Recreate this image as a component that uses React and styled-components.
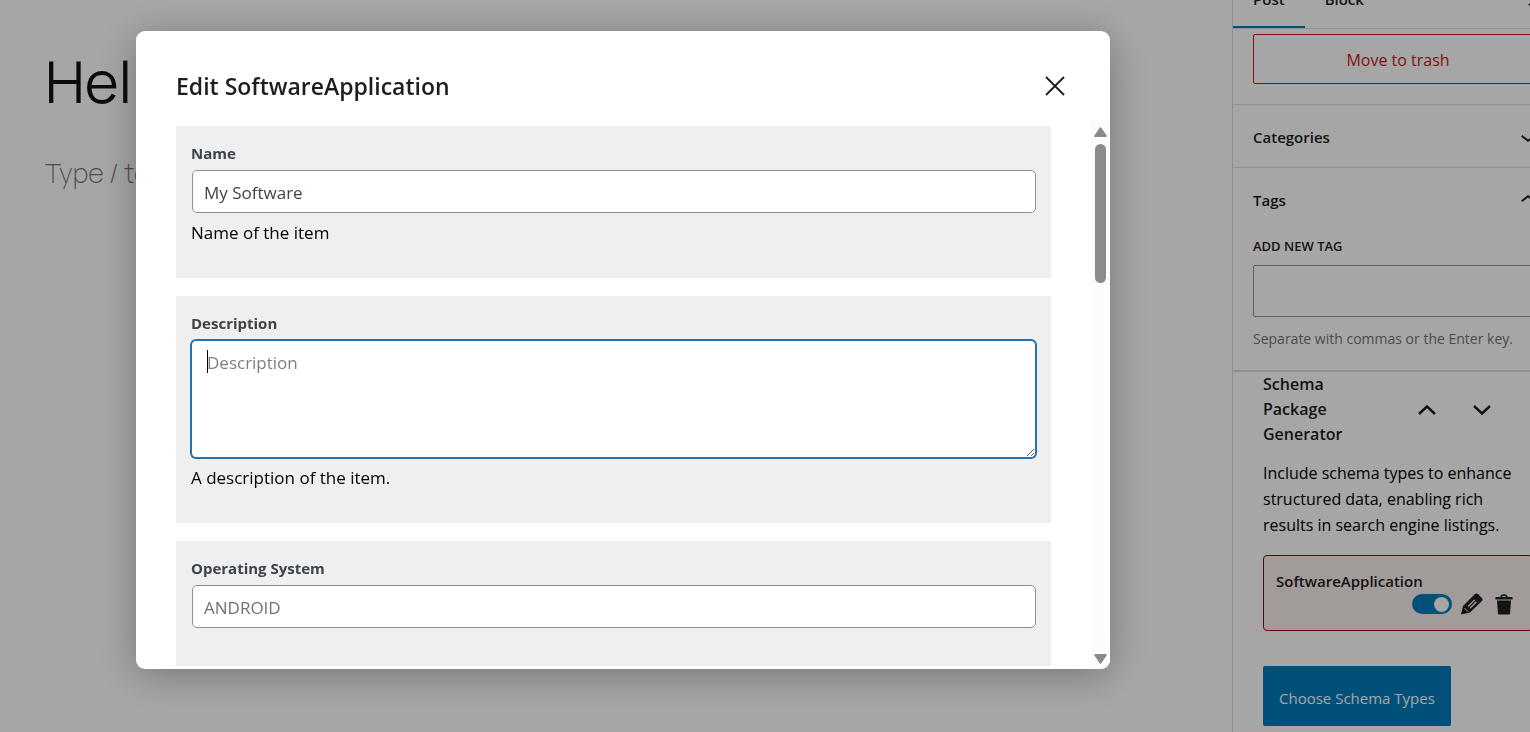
import React from 'react';
import styled, { createGlobalStyle } from 'styled-components';

const GlobalStyle = createGlobalStyle`
  * {
    box-sizing: border-box;
  }
  body {
    margin: 0;
    background: #fff;
    color: #1e1e1e;
    font-family: "Segoe UI", "Open Sans", "Noto Sans", sans-serif;
    font-size: 16px;
  }
  button, input, textarea {
    font-family: inherit;
    font-size: inherit;
  }
  h1, h2, h3, p {
    margin: 0;
  }
`;

const Page = styled.div`
  display: flex;
  height: 100vh;
  overflow: hidden;
`;

const Canvas = styled.main`
  flex: 1;
  min-width: 0;
  padding: 40px 45px;
  font-family: Manrope, Inter, sans-serif;
`;

const PostTitle = styled.h1`
  color: #111;
  font-size: 58px;
  line-height: 82px;
  font-weight: 400;
`;

const PostPrompt = styled.p`
  margin-top: 33px;
  color: #767676;
  font-size: 27px;
  line-height: 36px;
  font-weight: 200;
`;

const Sidebar = styled.aside`
  flex: 0 0 331px;
  margin-right: -33px;
  border-left: 1px solid #ddd;
`;

const Tabs = styled.div`
  display: flex;
  align-items: stretch;
  height: 60px;
  margin-top: -31px;
  border-bottom: 1px solid #ddd;
`;

const Tab = styled.button`
  padding: 0 20px;
  border: 0;
  background: none;
  color: #1e1e1e;
  font-size: 15px;
  font-weight: 600;
  box-shadow: ${({ $active }) => ($active ? 'inset 0 -2px 0 #007cba' : 'none')};
`;

const TabClose = styled.button`
  margin-left: auto;
  padding: 0 21px;
  border: 0;
  background: none;
  display: flex;
  align-items: center;
`;

const Panel = styled.section`
  padding: ${({ $pad }) => $pad || '0 20px'};
  border-bottom: ${({ $line }) => $line || 1}px solid #ddd;
`;

const TrashButton = styled.button`
  width: 100%;
  height: 50px;
  padding: 2px 0 0;
  border: 1px solid #cc1818;
  border-radius: 2px;
  background: none;
  color: #cc1818;
  font-size: 16px;
`;

const PanelToggle = styled.button`
  display: flex;
  justify-content: space-between;
  align-items: center;
  width: 100%;
  height: 62px;
  padding: 2px 0 0;
  border: 0;
  background: none;
  color: #1e1e1e;
  font-size: 15px;
  font-weight: 600;
`;

const TagLabel = styled.label`
  display: block;
  margin-top: 6px;
  font-size: 13px;
  line-height: 20px;
  font-weight: 600;
  text-transform: uppercase;
`;

const TagInput = styled.input`
  display: block;
  width: 100%;
  height: 52px;
  margin-top: 9px;
  border: 1px solid #949494;
  border-radius: 2px;
  background: #fff;
`;

const TagHint = styled.p`
  margin: 12px 0 21px;
  color: #757575;
  font-size: 14px;
  line-height: 20px;
  white-space: nowrap;
`;

const Schema = styled.section`
  padding: 0 30px;
`;

const SchemaHead = styled.div`
  display: flex;
  align-items: center;
`;

const SchemaTitle = styled.h2`
  width: 136px;
  padding-right: 40px;
  font-size: 16px;
  line-height: 25px;
  font-weight: 600;
`;

const IconButton = styled.button`
  display: flex;
  align-items: center;
  justify-content: center;
  width: ${({ $width }) => $width}px;
  padding: 0;
  border: 0;
  background: none;
  color: #1e1e1e;
`;

const SchemaText = styled.p`
  margin: 13px -4px 0 0;
  color: #000;
  font-size: 16px;
  line-height: 26px;
`;

const SchemaCard = styled.div`
  height: 76px;
  margin-top: 17px;
  padding: 14px 12px;
  border: 1px solid #a00000;
  border-radius: 4px;
  background: #f7efec;
`;

const SchemaName = styled.label`
  display: block;
  font-size: 15px;
  line-height: 22px;
  font-weight: 600;
`;

const SchemaActions = styled.div`
  display: flex;
  justify-content: flex-end;
  align-items: center;
  height: 24px;
`;

const Switch = styled.input.attrs({ type: 'checkbox' })`
  appearance: none;
  display: flex;
  align-items: center;
  justify-content: flex-end;
  width: 40px;
  height: 20px;
  margin: 0 4px 0 0;
  padding: 0 3px;
  border-radius: 10px;
  background: #007cba;

  &::before {
    content: "";
    width: 15px;
    height: 15px;
    border-radius: 50%;
    background: #fff;
  }
`;

const ChooseButton = styled.button`
  height: 60px;
  margin-top: 35px;
  padding: 3px 16px 0;
  border: 0;
  border-radius: 2px;
  background: #007cba;
  color: #fff;
  font-size: 15px;
`;

const Overlay = styled.div`
  position: fixed;
  inset: 0;
  display: flex;
  padding: 31px 420px 63px 136px;
  background: rgba(0, 0, 0, 0.35);
`;

const Modal = styled.div`
  flex: 1;
  min-width: 0;
  display: flex;
  flex-direction: column;
  overflow: hidden;
  border-radius: 9px;
  background: #fff;
  box-shadow: 0 6px 40px rgba(0, 0, 0, 0.3);
`;

const ModalHeader = styled.header`
  display: flex;
  align-items: center;
  justify-content: space-between;
  height: 90px;
  padding: 20px 40px 0;
`;

const ModalTitle = styled.h2`
  font-size: 23px;
  line-height: 32px;
  font-weight: 600;
`;

const ModalBody = styled.div`
  flex: 1;
  min-height: 0;
  display: flex;
`;

const Fields = styled.form`
  flex: 1;
  min-width: 0;
  display: flex;
  flex-direction: column;
  gap: 18px;
  padding: 5px 40px 3px;
  overflow: hidden;
`;

const FieldBox = styled.div`
  padding: 17px 15px 38px;
  background: #efefef;
`;

const FieldLabel = styled.label`
  display: block;
  height: 27px;
  color: #3c434a;
  font-size: 15px;
  line-height: 20px;
  font-weight: 700;
`;

const FieldInput = styled.input`
  display: block;
  width: calc(100% - 1px);
  height: 43px;
  margin-left: 1px;
  padding: 2px 11px 0;
  border: 1px solid #8c8f94;
  border-radius: 5px;
  background: #fff;
  color: #3c434a;
  font-size: 17px;

  &::placeholder {
    color: #6d7278;
  }
`;

const AreaWrap = styled.div`
  position: relative;
`;

const FieldArea = styled.textarea`
  display: block;
  width: 100%;
  height: 118px;
  padding: 10px 15px;
  border: 1px solid #2271b1;
  border-radius: 5px;
  outline: none;
  background: #fff;
  box-shadow: 0 0 0 1px #2271b1;
  caret-color: transparent;
  font-size: 17px;
  line-height: 24px;
  resize: vertical;

  &::placeholder {
    color: #7b8087;
  }
`;

const Caret = styled.span`
  position: absolute;
  left: 16px;
  top: 10px;
  width: 1px;
  height: 23px;
  background: #000;
`;

const FieldHelp = styled.p`
  height: 27px;
  padding-top: 6px;
  color: #000;
  font-size: 17px;
  line-height: 27px;
`;

const Scrollbar = styled.div`
  display: flex;
  flex-direction: column;
  align-items: center;
  justify-content: space-between;
  width: 19px;
  padding: 6px 0 5px;
  background: #fcfcfc;
`;

const Thumb = styled.div`
  width: 11px;
  height: 139px;
  margin: 7px 0 auto;
  border-radius: 6px;
  background: #8b8b8b;
`;

function Chevron({ up, size = 30 }) {
  return (
    <svg width={size} height={size} viewBox="0 0 24 24" fill="currentColor" aria-hidden="true">
      <path d={up
        ? 'M6.5 12.4L12 8l5.5 4.4-.9 1.2L12 10l-4.5 3.6-1-1.2z'
        : 'M17.5 11.6L12 16l-5.5-4.4.9-1.2L12 14l4.5-3.6 1 1.2z'} />
    </svg>
  );
}

function BoldChevron({ up }) {
  return (
    <svg width="18" height="12" viewBox="0 0 18 12" fill="none" stroke="currentColor" strokeWidth="2.4" aria-hidden="true">
      <path d={up ? 'M1 10l8-7.5 8 7.5' : 'M1 2l8 7.5L17 2'} />
    </svg>
  );
}

function CloseIcon({ size = 20 }) {
  return (
    <svg width={size} height={size} viewBox="0 0 20 20" fill="none" stroke="#1e1e1e" strokeWidth="1.9" aria-hidden="true">
      <path d="M1 1l18 18M19 1L1 19" />
    </svg>
  );
}

function PencilIcon() {
  return (
    <svg width="22" height="22" viewBox="0 0 22 22" aria-hidden="true">
      <path d="M0 21.5l2-8.5L13.8 1.2q1.7-1.6 3.4 0l3.7 3.7q1.5 1.6 0 3.2L9 19.5z" fill="#1e1e1e" />
      <path d="M6.6 13l6.6-6.6 2.8 2.8-6.6 6.6z" fill="#f7efec" />
      <path d="M7.4 15l7.6-7.6" stroke="#1e1e1e" strokeWidth="1.2" />
      <path d="M3.4 15l3.8 3.8" stroke="#f7efec" strokeWidth="0.9" />
    </svg>
  );
}

function TrashIcon() {
  return (
    <svg width="18" height="21" viewBox="0 0 18 21" fill="#1e1e1e" aria-hidden="true">
      <path d="M1.2 3h15.6q.8 0 .8.8v1.6H.4V3.8Q.4 3 1.2 3z" />
      <path d="M6 3.4C6.3.2 11.7.2 12 3.4" fill="none" stroke="#1e1e1e" strokeWidth="1.5" />
      <path d="M2 6.6h14L15 19.4q-.1 1.2-1.3 1.2H4.3q-1.2 0-1.3-1.2z" />
    </svg>
  );
}

function ScrollArrow({ down }) {
  return (
    <svg width="13" height="10" viewBox="0 0 13 10" fill="#8b8b8b" stroke="#8b8b8b" strokeWidth="2" strokeLinejoin="round" aria-hidden="true">
      <path d={down ? 'M1.2 1h10.6L6.5 8.8z' : 'M1.2 9h10.6L6.5 1.2z'} />
    </svg>
  );
}

function SettingsSidebar() {
  return (
    <Sidebar>
      <Tabs role="tablist">
        <Tab role="tab" aria-selected="true" $active>Post</Tab>
        <Tab role="tab" aria-selected="false">Block</Tab>
        <TabClose aria-label="Close settings"><CloseIcon size={14} /></TabClose>
      </Tabs>
      <Panel $pad="5px 20px 20px">
        <TrashButton>Move to trash</TrashButton>
      </Panel>
      <Panel>
        <PanelToggle aria-expanded="false">Categories<Chevron /></PanelToggle>
      </Panel>
      <Panel $line={2}>
        <PanelToggle aria-expanded="true">Tags<Chevron up /></PanelToggle>
        <TagLabel htmlFor="new-tag">Add new tag</TagLabel>
        <TagInput id="new-tag" type="text" />
        <TagHint>Separate with commas or the Enter key.</TagHint>
      </Panel>
      <Schema>
        <SchemaHead>
          <SchemaTitle>Schema Package Generator</SchemaTitle>
          <IconButton $width={55} aria-label="Move up"><BoldChevron up /></IconButton>
          <IconButton $width={55} aria-label="Move down"><BoldChevron /></IconButton>
        </SchemaHead>
        <SchemaText>
          Include schema types to enhance structured data, enabling rich results in search engine listings.
        </SchemaText>
        <SchemaCard>
          <SchemaName htmlFor="schema-on">SoftwareApplication</SchemaName>
          <SchemaActions>
            <Switch id="schema-on" defaultChecked />
            <IconButton $width={32} aria-label="Edit"><PencilIcon /></IconButton>
            <IconButton $width={32} aria-label="Delete"><TrashIcon /></IconButton>
          </SchemaActions>
        </SchemaCard>
        <ChooseButton>Choose Schema Types</ChooseButton>
      </Schema>
    </Sidebar>
  );
}

function EditModal() {
  return (
    <Overlay>
      <Modal role="dialog" aria-labelledby="modal-title">
        <ModalHeader>
          <ModalTitle id="modal-title">Edit SoftwareApplication</ModalTitle>
          <IconButton $width={30} aria-label="Close"><CloseIcon /></IconButton>
        </ModalHeader>
        <ModalBody>
          <Fields>
            <FieldBox>
              <FieldLabel htmlFor="name">Name</FieldLabel>
              <FieldInput id="name" type="text" defaultValue="My Software" />
              <FieldHelp>Name of the item</FieldHelp>
            </FieldBox>
            <FieldBox>
              <FieldLabel htmlFor="description">Description</FieldLabel>
              <AreaWrap>
                <FieldArea id="description" placeholder="Description" />
                <Caret />
              </AreaWrap>
              <FieldHelp>A description of the item.</FieldHelp>
            </FieldBox>
            <FieldBox>
              <FieldLabel htmlFor="os">Operating System</FieldLabel>
              <FieldInput id="os" type="text" placeholder="ANDROID" />
            </FieldBox>
          </Fields>
          <Scrollbar aria-hidden="true">
            <ScrollArrow />
            <Thumb />
            <ScrollArrow down />
          </Scrollbar>
        </ModalBody>
      </Modal>
    </Overlay>
  );
}

function App() {
  return (
    <>
      <GlobalStyle />
      <Page>
        <Canvas>
          <PostTitle>Hello world!</PostTitle>
          <PostPrompt>Type / to choose a block</PostPrompt>
        </Canvas>
        <SettingsSidebar />
      </Page>
      <EditModal />
    </>
  );
}

export default App;
